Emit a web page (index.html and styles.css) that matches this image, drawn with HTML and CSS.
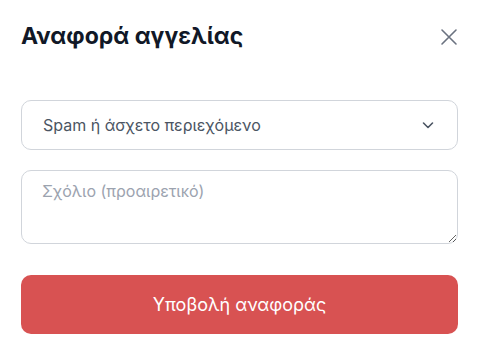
FILE: index.html
```html
<!DOCTYPE html>
<html lang="el">
<head>
<meta charset="utf-8">
<link rel="stylesheet" href="styles.css">
</head>
<body>
<div class="modal">
  <div class="header">
    <h2 class="title">Αναφορά αγγελίας</h2>
    <button class="close" aria-label="close">
      <svg width="18" height="18" viewBox="0 0 18 18"><path d="M2 2L16 16M16 2L2 16" stroke="#6b7280" stroke-width="1.6" stroke-linecap="round" fill="none"/></svg>
    </button>
  </div>
  <div class="select">
    <span>Spam ή άσχετο περιεχόμενο</span>
    <svg width="14" height="14" viewBox="0 0 14 14"><path d="M2.5 5L7 9.5L11.5 5" stroke="#4b5563" stroke-width="1.6" stroke-linecap="round" stroke-linejoin="round" fill="none"/></svg>
  </div>
  <textarea class="comment" placeholder="Σχόλιο (προαιρετικό)"></textarea>
  <button class="submit">Υποβολή αναφοράς</button>
</div>
</body>
</html>
```
FILE: styles.css
```css
html, body {
  margin: 0;
  padding: 0;
  background: #ffffff;
}
body {
  font-family: Inter, "Noto Sans", sans-serif;
}
.modal {
  padding: 18px 20px 0 21px;
  display: flex;
  flex-direction: column;
}
.header {
  display: flex;
  align-items: center;
  justify-content: space-between;
  height: 36px;
}
.title {
  margin: 0;
  font-size: 23px;
  font-weight: 700;
  color: #111827;
  letter-spacing: 0;
}
.close {
  border: 0;
  background: none;
  padding: 0;
  width: 18px;
  height: 18px;
  display: flex;
  margin-top: 1px;
}
.select {
  margin-top: 46px;
  height: 48px;
  border: 1px solid #d1d5db;
  border-radius: 10px;
  display: flex;
  align-items: center;
  justify-content: space-between;
  padding: 0 22px 0 21px;
  font-size: 16px;
  color: #4b5563;
}
.comment {
  margin-top: 20px;
  height: 74px;
  box-sizing: border-box;
  border: 1px solid #d1d5db;
  border-radius: 10px;
  padding: 10px 20px;
  font-family: Inter, "Noto Sans", sans-serif;
  font-size: 16px;
  color: #374151;
  resize: vertical;
  outline: none;
}
.comment::placeholder {
  color: #9ca3af;
}
.submit {
  margin-top: 31px;
  height: 59px;
  border: 0;
  border-radius: 10px;
  background: #d85252;
  color: #ffffff;
  font-family: Inter, "Noto Sans", sans-serif;
  font-size: 18px;
  font-weight: 400;
}
```
